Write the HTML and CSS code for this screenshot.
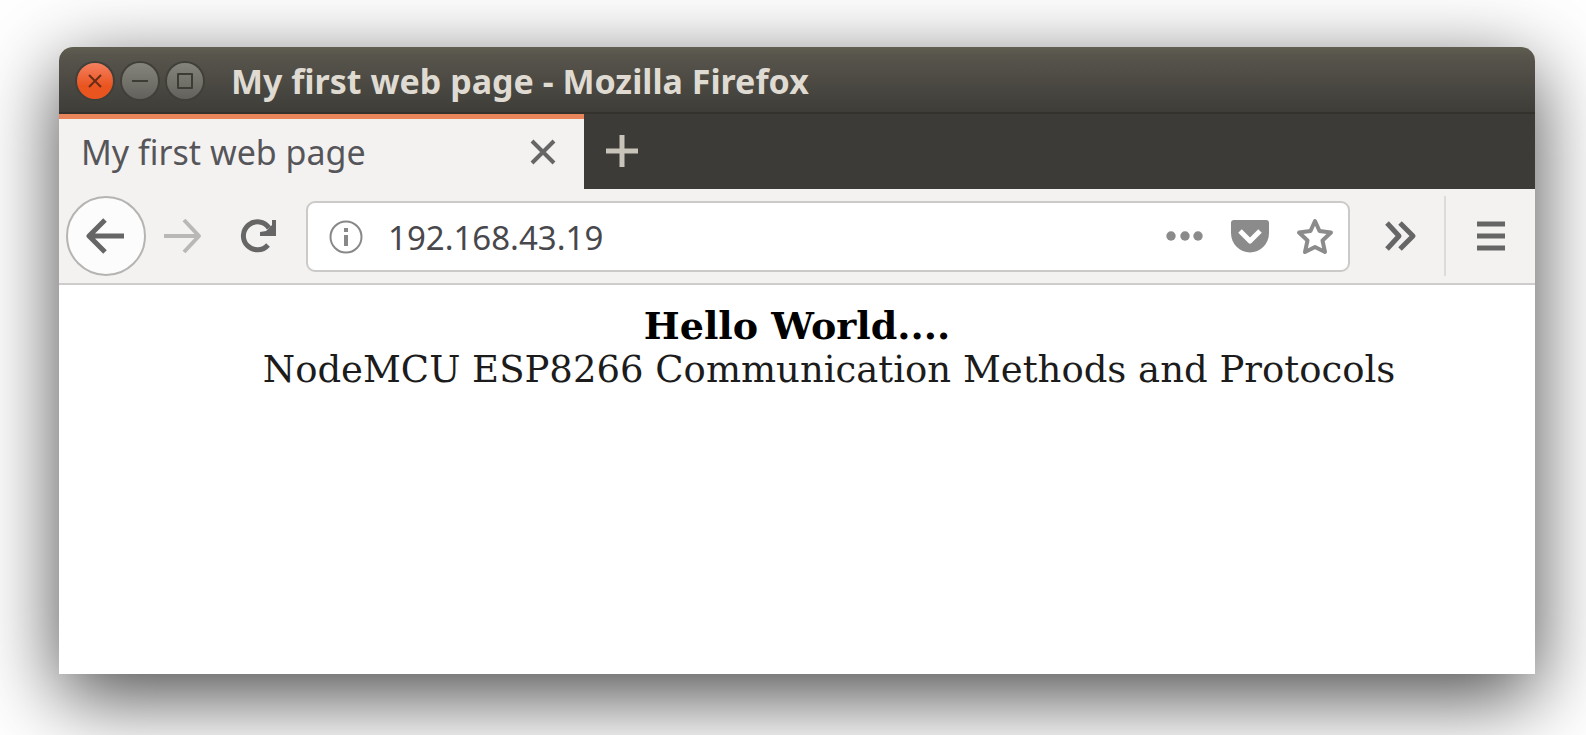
FILE: index.html
```html
<!DOCTYPE html>
<html lang="en">
<head>
<meta charset="utf-8">
<title>My first web page</title>
<link rel="stylesheet" href="styles.css">
</head>
<body>
<div class="window">
  <header class="titlebar">
    <div class="controls">
      <button class="control control-close" aria-label="Close window"><svg viewBox="0 0 36 36"><path d="M12 12l12 12M24 12L12 24"/></svg></button>
      <button class="control" aria-label="Minimize window"><svg viewBox="0 0 36 36"><path d="M10 18h16"/></svg></button>
      <button class="control" aria-label="Maximize window"><svg viewBox="0 0 36 36"><path d="M11 11h14v14H11z"/></svg></button>
    </div>
    <div class="window-title">My first web page - Mozilla Firefox</div>
  </header>
  <div class="tabs">
    <div class="tab">
      <span class="tab-label">My first web page</span>
      <button class="icon-button tab-close" aria-label="Close tab"><svg viewBox="0 0 32 32"><path d="M5 5l22 22M27 5L5 27"/></svg></button>
    </div>
    <button class="icon-button new-tab" aria-label="New tab"><svg viewBox="0 0 40 40"><path d="M20 4v32M4 20h32"/></svg></button>
  </div>
  <nav class="toolbar">
    <button class="icon-button back" aria-label="Back"><svg viewBox="0 0 40 40"><path d="M38 20H4M19 4L3 20l16 16"/></svg></button>
    <button class="icon-button forward" aria-label="Forward" disabled><svg viewBox="0 0 40 40"><path d="M2 20h34M22 4l15 16-15 16"/></svg></button>
    <button class="icon-button reload" aria-label="Reload"><svg viewBox="0 0 40 40"><path d="M30 29A14 14 0 1 1 31 12"/><path class="solid" d="M38 4v16H22v-4l6-1 6-6V4z"/></svg></button>
    <div class="urlbar">
      <button class="icon-button info" aria-label="Site information"><svg viewBox="0 0 36 36"><circle cx="19" cy="19" r="15.500"/><path class="solid" d="M17 10h4v4h-4zM17 17h4v11h-4z"/></svg></button>
      <input class="address" type="text" aria-label="Address" value="192.168.43.19">
      <button class="icon-button light" aria-label="Page actions"><svg viewBox="0 0 40 40"><g class="solid"><circle cx="6" cy="20" r="4.700"/><circle cx="20" cy="20" r="4.700"/><circle cx="33" cy="20" r="4.700"/></g></svg></button>
      <button class="icon-button light" aria-label="Save to Pocket"><svg viewBox="0 0 40 40"><path class="solid" d="M4 4h32q3 0 3 3v10a19 19.500 0 0 1-38 0V7q0-3 3-3z"/><path class="pocket-mark" d="M10 15l10 10 10-10"/></svg></button>
      <button class="icon-button light star" aria-label="Bookmark this page"><svg viewBox="0 0 40 40"><path d="M20 5l4.500 10 11.500 1.500-8.500 8L30 36l-10-5-10 5 2.500-11.500-8.500-8L15.500 15z"/></svg></button>
    </div>
    <button class="icon-button overflow" aria-label="More tools"><svg viewBox="0 0 40 40"><path d="M7 7l12 13L7 33M20 7l13 13-13 13"/></svg></button>
    <span class="separator"></span>
    <button class="icon-button menu" aria-label="Open menu"><svg viewBox="0 0 40 40"><path d="M7 8h28M7 20h28M7 32h28"/></svg></button>
  </nav>
  <main class="page">
    <h1 class="heading">Hello World....</h1>
    <p class="subtitle">NodeMCU ESP8266 Communication Methods and Protocols</p>
  </main>
</div>
</body>
</html>
```
FILE: styles.css
```css
* { box-sizing: border-box; }
body {
  margin: 0;
  min-height: 100vh;
  padding: 47px 51px 61px 59px;
  display: flex;
  background: #fff;
  font-family: "Noto Sans", "Open Sans", sans-serif;
  overflow: hidden;
}
button {
  padding: 0;
  border: 0;
  background: none;
  flex: none;
  display: flex;
  align-items: center;
  justify-content: center;
}
svg { display: block; width: 100%; fill: none; stroke: currentColor; stroke-linejoin: round; }
.window {
  flex: 1;
  min-width: 0;
  display: flex;
  flex-direction: column;
  background: #fff;
  border-radius: 14px 14px 0 0;
  box-shadow: 0 22px 80px rgba(0, 0, 0, 0.72);
}
.titlebar {
  height: 67px;
  display: flex;
  align-items: center;
  gap: 28px;
  padding: 3px 0 0 18px;
  border-radius: 14px 14px 0 0;
  border-bottom: 2px solid #33322d;
  background: linear-gradient(#605e50, #58554d 12%, #504d46 40%, #3e3d38);
}
.controls { display: flex; gap: 9px; }
.control {
  width: 36px;
  height: 36px;
  border-radius: 50%;
  color: #3c3b36;
  background: linear-gradient(#85847c, #62615b);
  box-shadow: 0 0 0 2px #403f39;
  stroke-width: 2;
}
.control-close { color: #6b2c17; background: linear-gradient(#f58060, #e9541f 65%); }
.window-title {
  color: #dfdbd2;
  font-size: 34px;
  font-weight: 700;
  line-height: 44px;
  white-space: nowrap;
}
.tabs { height: 75px; display: flex; align-items: stretch; background: #3c3b37; }
.tab {
  width: 36%;
  max-width: 525px;
  display: flex;
  align-items: center;
  justify-content: space-between;
  padding: 0 25px 4px 22px;
  border-top: 5px solid #e8855a;
  background: #f3f2f1;
}
.tab-label { color: #56565a; font-size: 34px; white-space: nowrap; }
.icon-button { width: 40px; color: #666; stroke-width: 5; }
.tab-close { width: 32px; stroke-width: 4; }
.new-tab { margin-left: 18px; padding-bottom: 2px; color: #c8c4ba; }
.toolbar {
  height: 96px;
  display: flex;
  align-items: center;
  padding: 0 25px 0 7px;
  background: #f3f2f1;
  border-bottom: 2px solid #cfcdcb;
}
.back {
  width: 80px;
  height: 80px;
  padding: 0 18px;
  border: 2px solid #b5b4b2;
  border-radius: 50%;
  background: #fcfcfc;
}
.forward { margin-left: 16px; color: #b9b8b7; stroke-width: 4; }
.reload { margin-left: 36px; }
.urlbar {
  flex: 1;
  min-width: 0;
  height: 71px;
  margin-left: 28px;
  padding: 0 13px 0 19px;
  display: flex;
  align-items: center;
  gap: 25px;
  border: 2px solid #cccac8;
  border-radius: 9px;
  background: #fff;
}
.info { width: 36px; color: #888; stroke-width: 2; }
.address {
  flex: 1;
  min-width: 0;
  padding: 3px 0 0;
  border: 0;
  outline: 0;
  background: none;
  color: #48484c;
  font-family: inherit;
  font-size: 33px;
}
.light { color: #8b8b8b; stroke-width: 4; }
.solid { fill: currentColor; stroke: none; }
.pocket-mark { stroke: #fff; stroke-width: 5; }
.overflow { margin-left: 30px; }
.separator { width: 2px; height: 80px; margin: 0 24px; background: #dcdbda; }
.page {
  padding: 19px 8px;
  font-family: "DejaVu Serif", serif;
  font-size: 37px;
  line-height: 44px;
  text-align: center;
  color: #000;
}
.heading { margin: 0; font-size: 38px; font-weight: 700; }
.subtitle { margin: 0; padding-left: 64px; color: #1c1c1c; }
```
